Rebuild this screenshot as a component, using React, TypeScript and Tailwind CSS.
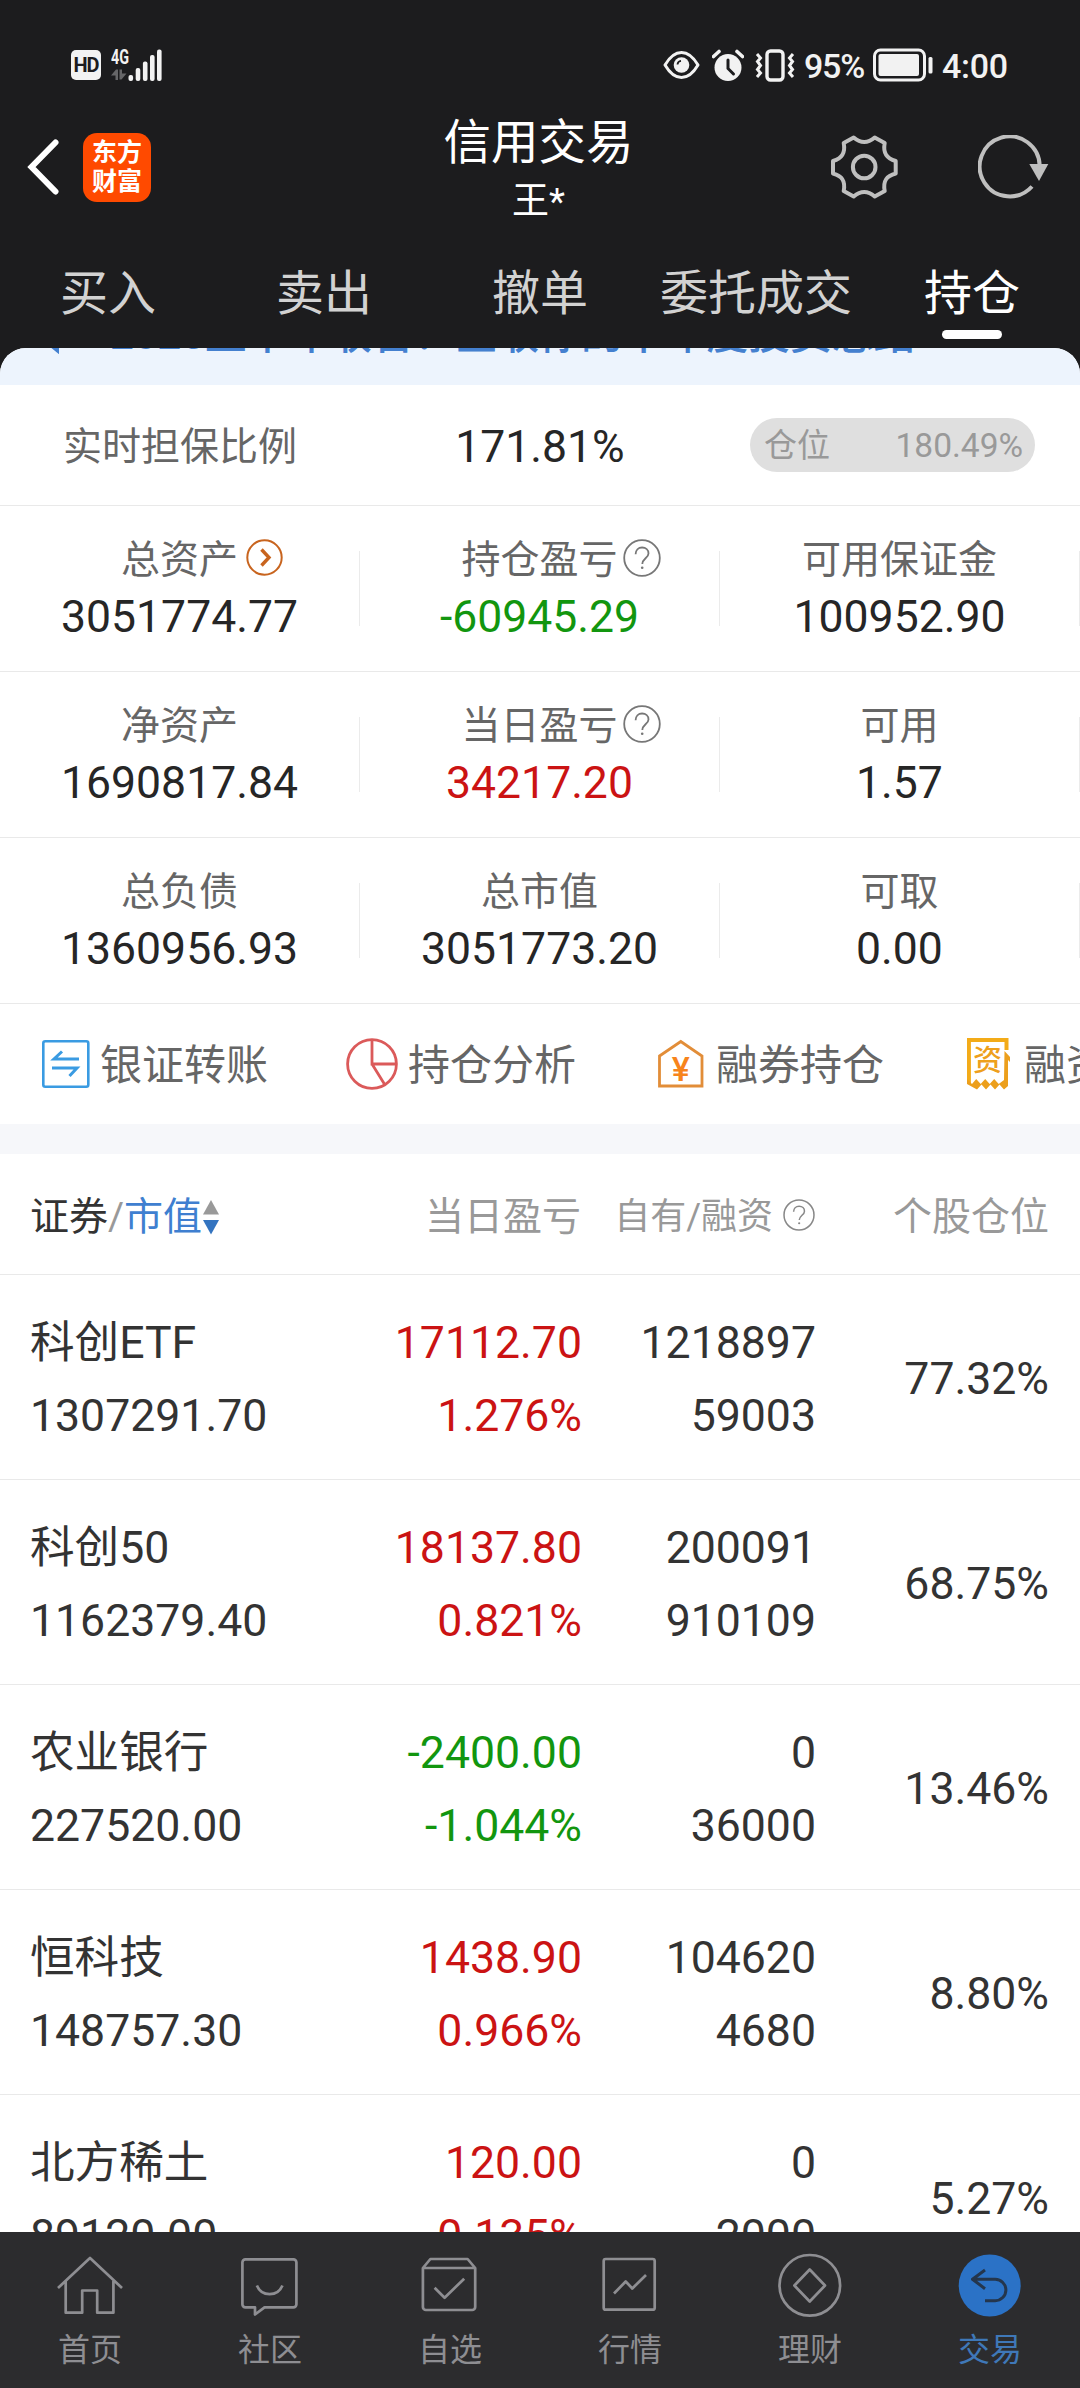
import React from 'react';

const STATS = [
  [
    { label: '总资产', value: '3051774.77', icon: 'arrow' },
    { label: '持仓盈亏', value: '-60945.29', icon: 'help', tone: 'down' },
    { label: '可用保证金', value: '100952.90' },
  ],
  [
    { label: '净资产', value: '1690817.84' },
    { label: '当日盈亏', value: '34217.20', icon: 'help', tone: 'up' },
    { label: '可用', value: '1.57' },
  ],
  [
    { label: '总负债', value: '1360956.93' },
    { label: '总市值', value: '3051773.20' },
    { label: '可取', value: '0.00' },
  ],
];

const HOLDINGS = [
  { name: '科创ETF', value: '1307291.70', profit: '17112.70', rate: '1.276%', own: '1218897', margin: '59003', share: '77.32%', up: true },
  { name: '科创50', value: '1162379.40', profit: '18137.80', rate: '0.821%', own: '200091', margin: '910109', share: '68.75%', up: true },
  { name: '农业银行', value: '227520.00', profit: '-2400.00', rate: '-1.044%', own: '0', margin: '36000', share: '13.46%', up: false },
  { name: '恒科技', value: '148757.30', profit: '1438.90', rate: '0.966%', own: '104620', margin: '4680', share: '8.80%', up: true },
  { name: '北方稀土', value: '89120.00', profit: '120.00', rate: '0.135%', own: '0', margin: '2000', share: '5.27%', up: true },
];

function HelpIcon({ size, color }: { size: number; color: string }) {
  return (
    <svg width={size} height={size} viewBox="0 0 38 38" fill="none" stroke={color} strokeWidth="1.8">
      <circle cx="19" cy="19" r="17.8" />
      <path d="M12.6 15.2c0-4 2.800-6.700 6.500-6.700s6.400 2.400 6.400 5.900c0 4.600-6.200 5.300-6.200 10.600" />
      <circle cx="19.200" cy="28.800" r="1.300" fill={color} stroke="none" />
    </svg>
  );
}

function ArrowIcon() {
  return (
    <svg width="37" height="37" viewBox="0 0 37 37" fill="none" stroke="#c8641e">
      <circle cx="18.500" cy="18.500" r="17.200" strokeWidth="2" />
      <path d="M15.500 10.500l7.500 8-7.500 8" strokeWidth="3.400" />
    </svg>
  );
}

function StatusBar() {
  return (
    <div className="flex h-[112px] items-center pt-[18px] pl-[71px] pr-[72px] text-[#f2f2f2]">
      <div className="flex h-[30px] w-[30px] items-center justify-center rounded-[5px] bg-[#f2f2f2] text-[20px] leading-[30px] font-bold tracking-[-1px] text-[#1c1c1e]">
        HD
      </div>
      <svg className="ml-[10px]" width="51" height="34" viewBox="0 0 51 34" fill="#f2f2f2">
        <text x="0" y="16" fontFamily="Roboto" fontWeight="700" fontSize="20" textLength="18" lengthAdjust="spacingAndGlyphs">4G</text>
        <g fill="#666668">
          <path d="M0 27.500l5-6h2V32H4.500v-4.500z" />
          <path d="M15.500 25.500l-5 6h-2V21.500H11v4z" />
        </g>
        <rect x="17.500" y="27" width="4.600" height="6" rx="2" />
        <rect x="24.700" y="20" width="4.600" height="13" rx="2" />
        <rect x="31.900" y="13.500" width="4.600" height="19.500" rx="2" />
        <rect x="39" y="7" width="4.600" height="26" rx="2" />
        <rect x="46" y="1.500" width="4.600" height="31.500" rx="2" />
      </svg>
      <div className="ml-auto flex items-center">
        <svg width="37" height="30" viewBox="0 0 37 30" fill="none" stroke="#f2f2f2">
          <path d="M2 15C7 6.500 12.500 2.500 18.500 2.500S30 6.500 35 15C30 23.500 24.500 27.500 18.500 27.500S7 23.500 2 15z" strokeWidth="3" strokeLinejoin="round" />
          <circle cx="18.500" cy="15" r="7.800" fill="#f2f2f2" stroke="none" />
          <path d="M14.500 14.500a4 4 0 0 1 3.500-3.700" stroke="#1c1c1e" strokeWidth="1.800" />
        </svg>
        <svg className="ml-[12px]" width="32" height="33" viewBox="0 0 32 33" fill="none">
          <circle cx="16" cy="18.500" r="13.500" fill="#f2f2f2" />
          <path d="M1.500 7.500l5.500-5M30.500 7.500l-5.500-5" stroke="#f2f2f2" strokeWidth="3.600" strokeLinecap="round" />
          <path d="M16 11v8.500l5.500 5.500" stroke="#1c1c1e" strokeWidth="3" strokeLinecap="round" />
        </svg>
        <svg className="ml-[11px]" width="40" height="33" viewBox="0 0 40 33" fill="none" stroke="#f2f2f2">
          <rect x="12" y="2" width="16" height="29" rx="3.500" strokeWidth="3.400" />
          <path d="M2 5l3.500 4-3 3.500 3 4-3 4 3 3.500L2 28M38 5l-3.500 4 3 3.500-3 4 3 4-3 3.500L38 28" strokeWidth="3" />
        </svg>
        <div className="mt-[2px] ml-[9px] w-[64px] text-[34px] leading-[40px] font-medium tracking-[-1.200px]">95%</div>
        <svg className="ml-[5px]" width="61" height="34" viewBox="0 0 61 34" fill="none">
          <rect x="1.500" y="2" width="50" height="30" rx="6" stroke="#f2f2f2" strokeWidth="3" />
          <rect x="5.500" y="6" width="40.500" height="22" rx="2" fill="#f2f2f2" />
          <rect x="55.500" y="9" width="4" height="16.500" rx="1.500" fill="#f2f2f2" />
        </svg>
        <div className="mt-[2px] ml-[8px] w-[66px] text-[34px] leading-[40px] font-medium tracking-[-0.300px]">4:00</div>
      </div>
    </div>
  );
}

function TitleBar() {
  return (
    <div className="flex h-[110px] items-center">
      <div className="flex w-[298px] items-center pl-[27px]">
        <svg width="32" height="56" viewBox="0 0 32 56" fill="none" stroke="#fff" strokeWidth="6" strokeLinecap="round" strokeLinejoin="miter">
          <path d="M28.500 3.500L4.500 28l24 24.500" />
        </svg>
        <div className="ml-[24px] flex h-[69px] w-[68px] flex-col items-center justify-center rounded-[14px] bg-[#ff4a00] text-[25px] leading-[29px] font-bold text-white">
          <span>东方</span>
          <span>财富</span>
        </div>
      </div>
      <div className="flex flex-1 flex-col items-center pt-[3px] pl-px text-white">
        <div className="text-[47.500px] leading-[60px]">信用交易</div>
        <div className="mt-[7px] text-[37px] leading-[44px]">王*</div>
      </div>
      <div className="flex w-[302px] items-center justify-end pr-[31px]">
        <svg width="67" height="64" viewBox="0 0 67 64" fill="none" stroke="#bfbfbf" strokeWidth="4" strokeLinejoin="round">
          <path d="M22.700 2.500Q33.200 11.500 43.700 2.500L53.700 8C52 17 54.500 23 64.700 26V38.500C54.500 41 52 47 53.700 56L43.700 61.500Q33.200 52.500 22.700 61.500L12.700 56C14.400 47 12 41 2 38.500V26C12 23 14.400 17 12.700 8z" />
          <circle cx="33.200" cy="32" r="11.300" />
        </svg>
        <svg className="ml-[80px]" width="71" height="64" viewBox="0 0 71 64" fill="none" stroke="#bfbfbf" strokeWidth="4">
          <path d="M61.700 31A30 30 0 1 0 54 51.500" />
          <path d="M51.300 29H70.300L61 46z" fill="#bfbfbf" stroke="none" />
        </svg>
      </div>
    </div>
  );
}

function Tabs() {
  const tabs = ['买入', '卖出', '撤单', '委托成交', '持仓'];
  return (
    <div className="grid h-[126px] grid-cols-5 pt-[42px] text-[48px] leading-[60px] text-[#d2d2d2]">
      {tabs.map((t, i) => (
        <div key={t} className="flex flex-col items-center whitespace-nowrap">
          <span className={i === 4 ? 'text-white' : ''}>{t}</span>
          {i === 4 && <span className="mt-[6px] h-[9px] w-[60px] rounded-full bg-white" />}
        </div>
      ))}
    </div>
  );
}

function Notice() {
  return (
    <div className="flex h-[37px] items-start overflow-hidden bg-[#edf4fd] text-[42px] leading-[50px] font-medium tracking-[-0.200px] text-[#4480cf]">
      <div className="-mt-[38px] flex items-center whitespace-nowrap">
        <svg className="ml-[36px] mr-[38px]" width="36" height="38" viewBox="0 0 36 38" fill="none" stroke="#4480cf" strokeWidth="4">
          <path d="M3 13v12h7l11 9V4l-11 9z" />
          <path d="M27 12c4 4 4 10 0 14" />
        </svg>
        <span>2025上半年收官！查收你的半年度投资总结</span>
      </div>
    </div>
  );
}

function RatioRow() {
  return (
    <div className="flex h-[121px] items-center border-b border-[#e9e9e9]">
      <div className="w-[360px] pt-[4px] pl-[63px] text-[39px] leading-[50px] text-[#666]">实时担保比例</div>
      <div className="w-[360px] pt-[4px] text-center text-[44.500px] leading-[50px] text-[#262626]">171.81%</div>
      <div className="ml-[30px] flex h-[54px] w-[285px] items-center justify-between rounded-full bg-[#dfdfdf] pt-[2px] pr-[12px] pl-[14px] text-[33px] leading-[50px] text-[#999]">
        <span>仓位</span>
        <span className="text-[33.500px]">180.49%</span>
      </div>
    </div>
  );
}

function StatCell({ label, value, icon, tone }: { label: string; value: string; icon?: string; tone?: string }) {
  const color = tone === 'up' ? 'text-[#cb1313]' : tone === 'down' ? 'text-[#12960f]' : 'text-[#262626]';
  return (
    <div className="flex h-full items-center">
      <div className="flex flex-1 flex-col items-center pt-[3px]">
        <div className="relative text-[39px] leading-[50px] text-[#666]">
          {label}
          {icon && (
            <span className={`absolute top-[4px] left-full w-[38px] [&>svg]:block ${icon === 'arrow' ? 'ml-[8px]' : 'ml-[5px]'}`}>
              {icon === 'arrow' ? <ArrowIcon /> : <HelpIcon size={38} color="#777" />}
            </span>
          )}
        </div>
        <div className={`mt-[4px] text-[44.500px] leading-[56px] ${color}`}>{value}</div>
      </div>
      <div className="h-[75px] w-px bg-[#ebebeb]" />
    </div>
  );
}

const ACTION_ICONS = [
  <svg width="48" height="48" viewBox="0 0 48 48" fill="none" stroke="#3a9be2" strokeWidth="2.600">
    <rect x="1.300" y="1.300" width="45" height="45.400" rx="2" />
    <path d="M37 19H12l8-7.500M10 28h25l-7.500 8" strokeWidth="3" />
  </svg>,
  <svg width="52" height="52" viewBox="0 0 52 52" fill="none" stroke="#db5a5a" strokeWidth="2.800">
    <circle cx="26" cy="26" r="24.400" />
    <path d="M26 1.500V26h24.500M26 26l13 21" />
  </svg>,
  <svg className="mr-[2px]" width="46" height="50" viewBox="0 0 46 50" fill="none" stroke="#e28d38" strokeWidth="2.800">
    <path d="M1.500 17L22.800 2.500 44 17v30H1.500z" />
    <text x="22.800" y="42" textAnchor="middle" fontFamily="Roboto" fontSize="34" fontWeight="500" fill="#f7841c" stroke="none">¥</text>
  </svg>,
  <svg className="mr-[3px]" width="44" height="52" viewBox="0 0 44 52" fill="none">
    <path d="M1.900 45V2H39.500V12" stroke="#f3ab18" strokeWidth="4" />
    <path d="M37.500 13l5.500 6v5l-2-2v26l-4 3.500-4.500-5-4.500 5-4.500-5-4.500 5-4.500-5-4.500 5L0 46v-5l5 5 4.200-5 4.500 5 4.500-5 4.500 5 4.500-5 4.500 5 5.300-4z" fill="#ec9f1c" />
    <text x="20.500" y="33" textAnchor="middle" fontFamily="Noto Sans CJK SC" fontSize="29" fontWeight="500" fill="#eea01c">资</text>
  </svg>,
];

function Actions() {
  const items = ['银证转账', '持仓分析', '融券持仓', '融资融券'];
  return (
    <div className="flex h-[120px] overflow-hidden pb-px">
      {items.map((t, i) => (
        <div key={t} className="flex w-[308px] shrink-0 items-center whitespace-nowrap">
          <div className="flex w-[100px] shrink-0 justify-end pr-[10px]">{ACTION_ICONS[i]}</div>
          <span className="pt-[5px] text-[42px] leading-[50px] text-[#666]">{t}</span>
        </div>
      ))}
    </div>
  );
}

const GRID = 'grid grid-cols-[251px_301px_234px_233px] pl-[30px]';

function TableHeader() {
  return (
    <div className={`${GRID} h-[121px] items-center border-b border-[#e9e9e9] pt-[5px] text-[39px] leading-[50px] text-[#999]`}>
      <div className="flex items-center whitespace-nowrap">
        <span className="text-[#333]">证券</span>
        <span>/</span>
        <span className="text-[#3f7fd0]">市值</span>
        <svg className="shrink-0" width="18" height="36" viewBox="0 0 18 36">
          <path d="M1 15.500L9 1l8 14.500z" fill="#999" />
          <path d="M1 21l8 14.500L17 21z" fill="#3474c0" />
        </svg>
      </div>
      <div className="pr-px text-right">当日盈亏</div>
      <div className="flex items-center justify-end pr-px text-[36px] whitespace-nowrap">
        自有/融资
        <span className="-mt-[4px] ml-[10px] [&>svg]:block"><HelpIcon size={32} color="#888" /></span>
      </div>
      <div className="text-right">个股仓位</div>
    </div>
  );
}

function HoldingRow({ h }: { h: (typeof HOLDINGS)[number] }) {
  return (
    <div className={`${GRID} h-[205px] shrink-0 items-center border-b border-[#e9e9e9] pt-[5px] text-[44.600px] leading-[73px] text-[#333]`}>
      <div className="whitespace-nowrap">
        <div>{h.name}</div>
        <div>{h.value}</div>
      </div>
      <div className={`text-right ${h.up ? 'text-[#cb1313]' : 'text-[#12960f]'}`}>
        <div>{h.profit}</div>
        <div>{h.rate}</div>
      </div>
      <div className="text-right">
        <div>{h.own}</div>
        <div>{h.margin}</div>
      </div>
      <div className="text-right">{h.share}</div>
    </div>
  );
}

const NAV = [
  { label: '首页', icon: <path d="M3 38L35 8l32 30M10.700 31v31.700h16.500V40.500h15v22.200h16.200V31" /> },
  {
    label: '社区',
    icon: <path d="M10.400 9.300h48a3 3 0 0 1 3 3v42a3 3 0 0 1-3 3H29.500L20 64.500v-7.200h-9.600a3 3 0 0 1-3-3v-42a3 3 0 0 1 3-3zM21.900 35.500c4.500 11.500 21 11.500 25.500 0" />,
  },
  {
    label: '自选',
    icon: <path d="M7.900 18L15.400 9h37.200l7.600 9v39a3 3 0 0 1-3 3H10.900a3 3 0 0 1-3-3zh52.300M19.600 37.700l10 10 19.600-19" />,
  },
  { label: '行情', icon: <path d="M10.700 9h47a2 2 0 0 1 2 2v46.700a2 2 0 0 1-2 2h-47a2 2 0 0 1-2-2V11a2 2 0 0 1 2-2zM19 43.500l11.700-12 6.600 7L51 25" /> },
  {
    label: '理财',
    icon: (
      <>
        <circle cx="34.800" cy="35.300" r="30.300" />
        <path d="M34.700 19.500L50 35.500l-15.300 16-15.300-16z" />
      </>
    ),
  },
  {
    label: '交易',
    icon: (
      <>
        <circle cx="34.700" cy="35.500" r="31" fill="#2b72c6" stroke="none" />
        <path d="M30 20L17.500 29.300 30 38.700M17.500 29.300h22.700a10.700 10.700 0 0 1 0 21.400H30" stroke="#24364d" strokeWidth="3" />
      </>
    ),
  },
];

function BottomNav() {
  return (
    <div className="grid h-[156px] shrink-0 grid-cols-6 bg-[#2c2c2e] pt-[18px]">
      {NAV.map((n) => (
        <div key={n.label} className="flex flex-col items-center">
          <svg width="70" height="70" viewBox="0 0 70 70" fill="none" stroke="#8e8e92" strokeWidth="2.700" strokeLinejoin="round">
            {n.icon}
          </svg>
          <span className={`mt-[10px] text-[32px] leading-[40px] ${n.label === '交易' ? 'text-[#3f78b8]' : 'text-[#8e8e92]'}`}>{n.label}</span>
        </div>
      ))}
    </div>
  );
}

export default function App() {
  return (
    <div className="flex h-[2388px] w-[1080px] flex-col overflow-hidden bg-[#1c1c1e] font-['Roboto','Noto_Sans_CJK_SC',sans-serif]">
      <header className="h-[348px] shrink-0">
        <StatusBar />
        <TitleBar />
        <Tabs />
      </header>
      <main className="flex h-[1884px] shrink-0 flex-col overflow-hidden rounded-t-[26px] bg-white [&>*]:shrink-0">
        <Notice />
        <RatioRow />
        {STATS.map((row, i) => (
          <div key={i} className="grid h-[166px] grid-cols-3 border-b border-[#e9e9e9]">
            {row.map((c) => (
              <StatCell key={c.label} {...c} />
            ))}
          </div>
        ))}
        <Actions />
        <div className="h-[30px] bg-[#f6f7fa]" />
        <TableHeader />
        {HOLDINGS.map((h) => (
          <HoldingRow key={h.name} h={h} />
        ))}
      </main>
      <BottomNav />
    </div>
  );
}
